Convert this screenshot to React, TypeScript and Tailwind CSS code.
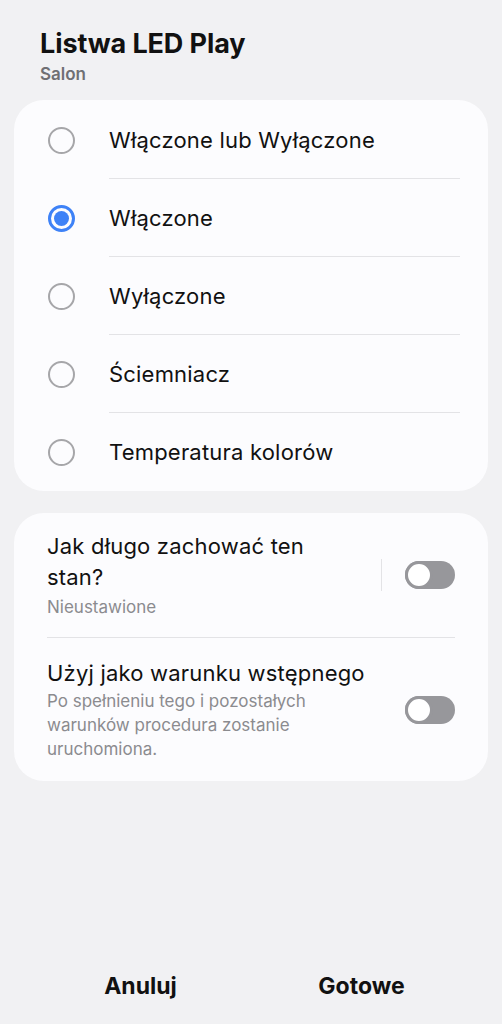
import React, { useState } from 'react';

const options = ['Włączone lub Wyłączone', 'Włączone', 'Wyłączone', 'Ściemniacz', 'Temperatura kolorów'];

const Toggle = () => (
  <div className="relative w-[50px] h-[28px] rounded-full bg-[#97979b]">
    <div className="absolute left-0 top-0 w-[28px] h-[28px] rounded-full bg-white border-[3px] border-[#97979b]" />
  </div>
);

const App = () => {
  const [selected, setSelected] = useState(1);

  return (
    <div className="w-[502px] h-[1024px] bg-[#f1f1f3] flex flex-col font-['Inter',sans-serif] text-[#111]">
      {/* Header */}
      <div className="pl-[40px] pt-[26px]">
        <div className="text-[27px] font-bold leading-[36px] tracking-[-0.1px]">Listwa LED Play</div>
        <div className="text-[17px] font-semibold text-[#6f6f73] leading-[22px] mt-[1px]">Salon</div>
      </div>

      {/* Options */}
      <div className="mx-[14px] mt-[15px] bg-[#fcfcfe] rounded-[30px] pt-[1px]">
        {options.map((opt, i) => (
          <div
            key={opt}
            onClick={() => setSelected(i)}
            className="flex items-center h-[78px] cursor-pointer"
          >
            <div className="w-[95px] flex justify-center">
              {selected === i ? (
                <div className="w-[27px] h-[27px] rounded-full border-[3px] border-[#3e82f7] flex items-center justify-center">
                  <div className="w-[15px] h-[15px] rounded-full bg-[#3e82f7]" />
                </div>
              ) : (
                <div className="w-[27px] h-[27px] rounded-full border-[2px] border-[#a6a6a9]" />
              )}
            </div>
            <div className={`flex-1 h-full flex items-center mr-[28px] text-[22px] tracking-[0.2px] ${i < options.length - 1 ? 'border-b border-[#e3e3e6]' : ''}`}>
              <span className={i < options.length - 1 ? 'translate-y-[0.5px]' : ''}>{opt}</span>
            </div>
          </div>
        ))}
      </div>

      {/* Settings */}
      <div className="mx-[14px] mt-[22px] bg-[#fcfcfe] rounded-[30px] px-[33px] pt-[18px] pb-[20px]">
        <div className="flex items-center pb-[18px] border-b border-[#e3e3e6]">
          <div className="flex-1">
            <div className="text-[22px] tracking-[0.2px] leading-[31px] w-[300px]">Jak długo zachować ten stan?</div>
            <div className="text-[17px] leading-[24px] text-[#8b8b8f] mt-[2px]">Nieustawione</div>
          </div>
          <div className="w-px h-[32px] bg-[#e3e3e6] mr-[23px]" />
          <Toggle />
        </div>
        <div className="flex items-center pt-[20px]">
          <div className="flex-1">
            <div className="text-[22px] tracking-[0.2px] leading-[31px]">Użyj jako warunku wstępnego</div>
            <div className="text-[17px] leading-[24px] text-[#8b8b8f] w-[300px]">
              Po spełnieniu tego i pozostałych warunków procedura zostanie uruchomiona.
            </div>
          </div>
          <Toggle />
        </div>
      </div>

      {/* Footer */}
      <div className="mt-auto h-[55px] flex items-start">
        <button className="w-1/2 pl-[30px] text-[23px] font-bold text-[#111]">Anuluj</button>
        <button className="w-1/2 pr-[30px] text-[23px] font-bold text-[#111]">Gotowe</button>
      </div>
    </div>
  );
};

export default App;
